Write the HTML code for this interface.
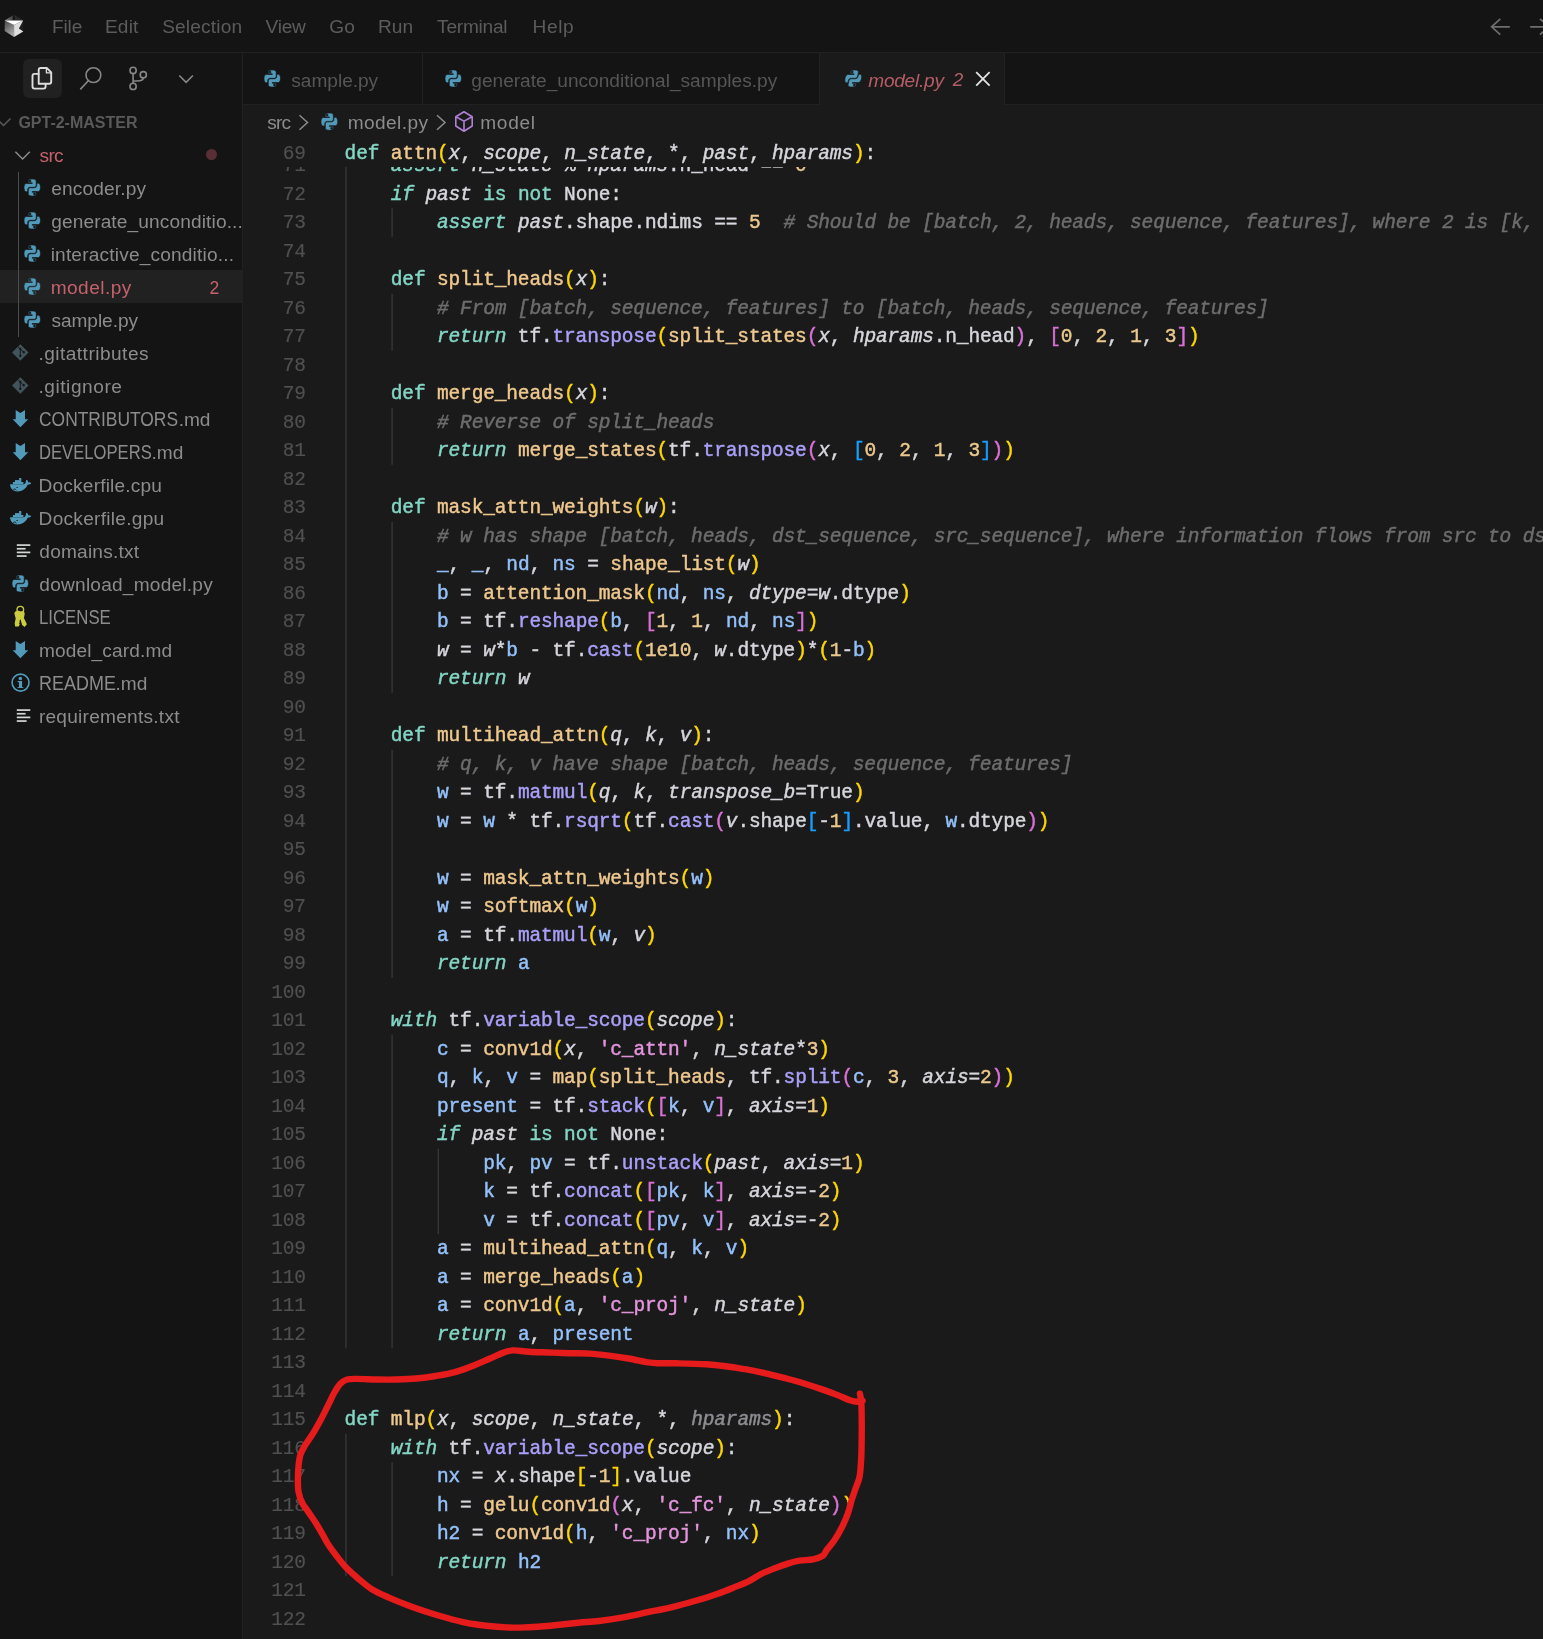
<!DOCTYPE html><html lang="en"><head><meta charset="utf-8"><title>model.py - gpt-2-master - Cursor</title><style>
*{box-sizing:border-box;margin:0;padding:0}
html,body{width:1543px;height:1639px;overflow:hidden;background:#141414}
body{position:relative;font-family:"Liberation Sans",sans-serif;color:#8c8c8c;will-change:transform}
.abs{position:absolute}
.t{position:absolute;white-space:pre;line-height:1}
#title{left:0;top:0;width:1543px;height:52px;background:#141414;border-bottom:1px solid #212121;height:53px}
.menu{font-size:19.1px;color:#5c5c5c;top:16.80px}
#side{left:0;top:53px;width:242px;height:1586px;background:#141414}
#sideborder{left:242px;top:53px;width:1px;height:1586px;background:#212121}
#tabs{left:243px;top:53px;width:1300px;height:52px;background:#141414;border-bottom:1px solid #212121}
#ed{left:243px;top:105px;width:1300px;height:1534px;background:#1a1a1a;overflow:hidden}
.row{position:absolute;left:0;width:242px;height:33px}
.lbl{font-size:19.1px;color:#8c8c8c}
.code{font-family:"Liberation Mono","DejaVu Sans Mono",monospace;font-size:19.5px;letter-spacing:-0.1519px;-webkit-text-stroke:0.45px;color:#d6d6dd;white-space:pre;position:absolute;line-height:28.5px;height:28.5px}
.ln{font-family:"Liberation Mono","DejaVu Sans Mono",monospace;font-size:19.5px;letter-spacing:-0.1519px;-webkit-text-stroke:0.15px;color:#505050;white-space:pre;position:absolute;line-height:28.5px;height:28.5px;text-align:right;width:80px}
.k{color:#83d6c5} .ki{color:#83d6c5;font-style:italic}
.f,.fd{color:#efc88e} .m{color:#aaa0fa} .p{font-style:italic;color:#d6d6dd} .pd{font-style:italic;color:#8d8d92}
.v{color:#94c1fa} .n{color:#ebc88d} .s{color:#e394dc} .c{color:#6d6d6d;font-style:italic}
.b1{color:#ffd700} .b2{color:#da70d6} .b3{color:#179fff}
.g{position:absolute;width:1px;background:#333}
</style></head><body>
<div id="title" class="abs">
<svg class="abs" style="left:0.00px;top:0.00px;overflow:visible" width="40" height="52" viewBox="0 0 40 52" ><defs>
<linearGradient id="cgl" x1="0" y1="0" x2="0.5" y2="1"><stop offset="0" stop-color="#454545"/><stop offset="1" stop-color="#a8a8a8"/></linearGradient>
<linearGradient id="cgt" x1="0" y1="0" x2="1" y2="0"><stop offset="0" stop-color="#8c8c8c"/><stop offset="0.75" stop-color="#4a4a4a"/><stop offset="1" stop-color="#161616"/></linearGradient>
</defs>
<polygon points="14.0,14.7 4.7,20.6 14.0,20.6" fill="url(#cgt)"/>
<polygon points="14.0,14.7 23.2,20.6 14.0,20.6" fill="#2a2a2a"/>
<polygon points="14.0,14.7 13.2,19.6 14.9,19.6" fill="#0c0c0c"/>
<polygon points="4.7,20.6 14.1,25.0 14.1,37.1 4.7,31.1" fill="url(#cgl)"/>
<polygon points="23.2,20.6 23.3,31.6 18.9,28.5" fill="#1e1e1e"/>
<polygon points="14.1,25.0 23.2,20.6 18.9,28.5 23.3,31.6 14.1,37.1" fill="#dedede"/>
<polygon points="4.7,20.6 23.2,20.6 14.1,25.0" fill="#ffffff"/></svg>
<div class="t menu" style="left:51.88px;letter-spacing:-0.087px">File</div>
<div class="t menu" style="left:104.98px;letter-spacing:0.165px">Edit</div>
<div class="t menu" style="left:162.18px;letter-spacing:0.167px">Selection</div>
<div class="t menu" style="left:265.47px;letter-spacing:-0.221px">View</div>
<div class="t menu" style="left:329.29px;letter-spacing:0.000px">Go</div>
<div class="t menu" style="left:377.98px;letter-spacing:0.034px">Run</div>
<div class="t menu" style="left:437.12px;letter-spacing:-0.241px">Terminal</div>
<div class="t menu" style="left:532.48px;letter-spacing:0.629px">Help</div>
<svg class="abs" style="left:0.00px;top:0.00px;overflow:visible" width="1543" height="52" viewBox="0 0 1543 52" ><path d="M1500.3 18.9 L1491.6 26.8 L1500.3 34.6 M1491.8 26.8 H1509.8" fill="none" stroke="#6e6e6e" stroke-width="1.7"/><path d="M1530.2 26.8 H1548 M1540 18.9 L1548.7 26.8 L1540 34.6" fill="none" stroke="#6e6e6e" stroke-width="1.7"/></svg>
</div>
<div id="side" class="abs"></div>
<svg class="abs" style="left:0.00px;top:0.00px;overflow:visible" width="242" height="110" viewBox="0 0 242 110" ><rect x="23.1" y="59.1" width="38.8" height="38.8" rx="6" fill="#212121"/>
<g fill="none" stroke="#dedede" stroke-width="1.9" stroke-linejoin="round" stroke-linecap="round">
<path d="M38.7 83.8 V70 a2 2 0 0 1 2 -2 H46.8 L51.2 72.4 V81.8 a2 2 0 0 1 -2 2 Z"/>
<path d="M46.4 68.4 V72.9 H50.9" stroke-width="1.3"/>
<path d="M38.4 73.9 H34.5 a2 2 0 0 0 -2 2 V86.6 a2 2 0 0 0 2 2 H43.6 a2 2 0 0 0 2 -2 V84.2"/>
</g>
<g fill="none" stroke="#878787" stroke-width="1.6" stroke-linecap="butt">
<circle cx="93.4" cy="75.1" r="7.4"/>
<path d="M88.3 80.7 L80.3 89.4"/>
<circle cx="133.1" cy="70.4" r="3.1"/>
<circle cx="133.1" cy="86.4" r="3.1"/>
<circle cx="143.3" cy="74.7" r="3.1"/>
<path d="M133.1 73.5 V83.3"/>
<path d="M143.3 77.8 C143.3 80.9 140 81 133.3 81"/>
<path d="M179.3 75.5 L186.1 82.4 L192.9 75.5"/>
</g></svg>
<div class="abs" style="left:0;top:270px;width:242px;height:33px;background:#212121"></div>
<div class="abs" style="left:18px;top:171.5px;width:1px;height:165px;background:#4c4c4c"></div>
<svg class="abs" style="left:0.00px;top:0.00px;overflow:visible" width="60" height="400" viewBox="0 0 60 400" ><path d="M-3.5 118.5 L3.5 125.5 L10.5 118.5" fill="none" stroke="#5a5a5a" stroke-width="1.5"/></svg>
<div class="t" style="left:18.39px;letter-spacing:-0.001px;top:114.9px;font-size:16px;font-weight:bold;color:#5a5a5a">GPT-2-MASTER</div>
<svg class="abs" style="left:0.00px;top:0.00px;overflow:visible" width="60" height="200" viewBox="0 0 60 200" ><path d="M15.4 151.7 L22.6 159.0 L29.8 151.7" fill="none" stroke="#8c8c8c" stroke-width="1.5"/></svg>
<div class="t lbl" style="left:39.62px;letter-spacing:-0.763px;top:145.70px;color:#c4616b">src</div>
<svg class="abs" style="left:24.25px;top:179.07px;overflow:visible" width="16.49" height="17.06" viewBox="0 0 110.6 109.8" preserveAspectRatio="none"><g fill="#519aba" fill-rule="evenodd" stroke="#141414" stroke-width="4.5" stroke-linejoin="round"><path d="M54.9 0C26.8 0 28.6 12.2 28.6 12.2l.03 12.6h26.8v3.8H18S0 26.6 0 55s15.7 27.4 15.7 27.4h9.4V69.2s-.5-15.7 15.4-15.7h26.6s14.9.24 14.9-14.4V14.9S84.3 0 54.9 0zM40.1 8.5m0-1.6a6.4 6.4 0 1 1 0 12.8 6.4 6.4 0 0 1 0-12.8z"/><path d="M55.7 109.8c28.1 0 26.3-12.2 26.3-12.2l-.03-12.6H55.2v-3.8h37.4s18 2 18-26.3-15.7-27.4-15.7-27.4h-9.4v13.2s.5 15.7-15.4 15.7H43.5s-14.9-.24-14.9 14.4v24.2s-2.3 14.9 27.1 14.9zm14.8-8.5m0 1.6a6.4 6.4 0 1 1 0-12.8 6.4 6.4 0 0 1 0 12.8z"/></g></svg>
<div class="t lbl" style="left:51.14px;letter-spacing:0.161px;top:178.70px">encoder.py</div>
<svg class="abs" style="left:24.25px;top:212.07px;overflow:visible" width="16.49" height="17.06" viewBox="0 0 110.6 109.8" preserveAspectRatio="none"><g fill="#519aba" fill-rule="evenodd" stroke="#141414" stroke-width="4.5" stroke-linejoin="round"><path d="M54.9 0C26.8 0 28.6 12.2 28.6 12.2l.03 12.6h26.8v3.8H18S0 26.6 0 55s15.7 27.4 15.7 27.4h9.4V69.2s-.5-15.7 15.4-15.7h26.6s14.9.24 14.9-14.4V14.9S84.3 0 54.9 0zM40.1 8.5m0-1.6a6.4 6.4 0 1 1 0 12.8 6.4 6.4 0 0 1 0-12.8z"/><path d="M55.7 109.8c28.1 0 26.3-12.2 26.3-12.2l-.03-12.6H55.2v-3.8h37.4s18 2 18-26.3-15.7-27.4-15.7-27.4h-9.4v13.2s.5 15.7-15.4 15.7H43.5s-14.9-.24-14.9 14.4v24.2s-2.3 14.9 27.1 14.9zm14.8-8.5m0 1.6a6.4 6.4 0 1 1 0-12.8 6.4 6.4 0 0 1 0 12.8z"/></g></svg>
<div class="t lbl" style="left:51.15px;letter-spacing:0.130px;top:211.70px">generate_unconditio...</div>
<svg class="abs" style="left:24.25px;top:245.07px;overflow:visible" width="16.49" height="17.06" viewBox="0 0 110.6 109.8" preserveAspectRatio="none"><g fill="#519aba" fill-rule="evenodd" stroke="#141414" stroke-width="4.5" stroke-linejoin="round"><path d="M54.9 0C26.8 0 28.6 12.2 28.6 12.2l.03 12.6h26.8v3.8H18S0 26.6 0 55s15.7 27.4 15.7 27.4h9.4V69.2s-.5-15.7 15.4-15.7h26.6s14.9.24 14.9-14.4V14.9S84.3 0 54.9 0zM40.1 8.5m0-1.6a6.4 6.4 0 1 1 0 12.8 6.4 6.4 0 0 1 0-12.8z"/><path d="M55.7 109.8c28.1 0 26.3-12.2 26.3-12.2l-.03-12.6H55.2v-3.8h37.4s18 2 18-26.3-15.7-27.4-15.7-27.4h-9.4v13.2s.5 15.7-15.4 15.7H43.5s-14.9-.24-14.9 14.4v24.2s-2.3 14.9 27.1 14.9zm14.8-8.5m0 1.6a6.4 6.4 0 1 1 0-12.8 6.4 6.4 0 0 1 0 12.8z"/></g></svg>
<div class="t lbl" style="left:50.67px;letter-spacing:0.182px;top:244.70px">interactive_conditio...</div>
<svg class="abs" style="left:24.25px;top:278.07px;overflow:visible" width="16.49" height="17.06" viewBox="0 0 110.6 109.8" preserveAspectRatio="none"><g fill="#519aba" fill-rule="evenodd" stroke="#212121" stroke-width="4.5" stroke-linejoin="round"><path d="M54.9 0C26.8 0 28.6 12.2 28.6 12.2l.03 12.6h26.8v3.8H18S0 26.6 0 55s15.7 27.4 15.7 27.4h9.4V69.2s-.5-15.7 15.4-15.7h26.6s14.9.24 14.9-14.4V14.9S84.3 0 54.9 0zM40.1 8.5m0-1.6a6.4 6.4 0 1 1 0 12.8 6.4 6.4 0 0 1 0-12.8z"/><path d="M55.7 109.8c28.1 0 26.3-12.2 26.3-12.2l-.03-12.6H55.2v-3.8h37.4s18 2 18-26.3-15.7-27.4-15.7-27.4h-9.4v13.2s.5 15.7-15.4 15.7H43.5s-14.9-.24-14.9 14.4v24.2s-2.3 14.9 27.1 14.9zm14.8-8.5m0 1.6a6.4 6.4 0 1 1 0-12.8 6.4 6.4 0 0 1 0 12.8z"/></g></svg>
<div class="t lbl" style="left:50.68px;letter-spacing:0.458px;top:277.70px;color:#c4616b">model.py</div>
<svg class="abs" style="left:24.25px;top:311.07px;overflow:visible" width="16.49" height="17.06" viewBox="0 0 110.6 109.8" preserveAspectRatio="none"><g fill="#519aba" fill-rule="evenodd" stroke="#141414" stroke-width="4.5" stroke-linejoin="round"><path d="M54.9 0C26.8 0 28.6 12.2 28.6 12.2l.03 12.6h26.8v3.8H18S0 26.6 0 55s15.7 27.4 15.7 27.4h9.4V69.2s-.5-15.7 15.4-15.7h26.6s14.9.24 14.9-14.4V14.9S84.3 0 54.9 0zM40.1 8.5m0-1.6a6.4 6.4 0 1 1 0 12.8 6.4 6.4 0 0 1 0-12.8z"/><path d="M55.7 109.8c28.1 0 26.3-12.2 26.3-12.2l-.03-12.6H55.2v-3.8h37.4s18 2 18-26.3-15.7-27.4-15.7-27.4h-9.4v13.2s.5 15.7-15.4 15.7H43.5s-14.9-.24-14.9 14.4v24.2s-2.3 14.9 27.1 14.9zm14.8-8.5m0 1.6a6.4 6.4 0 1 1 0-12.8 6.4 6.4 0 0 1 0 12.8z"/></g></svg>
<div class="t lbl" style="left:51.42px;letter-spacing:-0.048px;top:310.70px">sample.py</div>
<svg class="abs" style="left:0.00px;top:0.00px;overflow:visible" width="60" height="800" viewBox="0 0 60 800" ><path d="M20.3 344.15 L28.6 352.45 L20.3 360.75 L12.0 352.45 Z" fill="#41535b"/><path d="M17.7 346.55 L23.7 352.34999999999997 M20.3 349.05 V355.95" stroke="#141414" stroke-width="0.9" fill="none"/><circle cx="20.3" cy="348.95" r="1.15" fill="#141414"/><circle cx="23.75" cy="352.25" r="1.15" fill="#141414"/><circle cx="20.3" cy="355.95" r="1.15" fill="#141414"/></svg>
<div class="t lbl" style="left:38.41px;letter-spacing:0.469px;top:343.70px">.gitattributes</div>
<svg class="abs" style="left:0.00px;top:0.00px;overflow:visible" width="60" height="800" viewBox="0 0 60 800" ><path d="M20.3 377.15 L28.6 385.45 L20.3 393.75 L12.0 385.45 Z" fill="#41535b"/><path d="M17.7 379.55 L23.7 385.34999999999997 M20.3 382.05 V388.95" stroke="#141414" stroke-width="0.9" fill="none"/><circle cx="20.3" cy="381.95" r="1.15" fill="#141414"/><circle cx="23.75" cy="385.25" r="1.15" fill="#141414"/><circle cx="20.3" cy="388.95" r="1.15" fill="#141414"/></svg>
<div class="t lbl" style="left:38.41px;letter-spacing:0.558px;top:376.70px">.gitignore</div>
<svg class="abs" style="left:0.00px;top:0.00px;overflow:visible" width="60" height="800" viewBox="0 0 60 800" ><polygon fill="#519aba" points="15.7,410.0 20.4,413.0 25.0,410.0 25.0,419.2 28.25,419.2 20.4,427.2 12.7,419.2 15.7,419.2"/></svg>
<div class="t lbl" style="left:39.27px;top:409.70px"><span style="display:inline-block;width:139.38px;vertical-align:baseline"><span style="display:inline-block;font-size:19.5px;transform:scaleX(0.8934);transform-origin:0 50%">CONTRIBUTORS</span></span>.md</div>
<svg class="abs" style="left:0.00px;top:0.00px;overflow:visible" width="60" height="800" viewBox="0 0 60 800" ><polygon fill="#519aba" points="15.7,443.0 20.4,446.0 25.0,443.0 25.0,452.2 28.25,452.2 20.4,460.2 12.7,452.2 15.7,452.2"/></svg>
<div class="t lbl" style="left:38.79px;top:442.70px"><span style="display:inline-block;width:112.76px;vertical-align:baseline"><span style="display:inline-block;font-size:19.5px;transform:scaleX(0.8528);transform-origin:0 50%">DEVELOPERS</span></span>.md</div>
<svg class="abs" style="left:0.00px;top:0.00px;overflow:visible" width="60" height="800" viewBox="0 0 60 800" ><path fill="#519aba" d="M10.1 484.3 H22.5 C24.8 484.3 25.9 482.8 25.9 481.4 C25.9 480.4 26.3 479.9 27 480.1 C27.9 480.7 28.1 481.7 28.2 482.4 C29.3 482.0 30.6 482.4 31.3 483.0 C30.6 484.4 29 484.8 27.6 484.7 C26 488.6 22.5 491.4 17.5 491.4 C12.8 491.4 10.1 488.4 10.1 484.3 Z"/><rect x="12.9" y="482.0" width="10.5" height="2.1" fill="#519aba"/><rect x="15" y="480.1" width="6.3" height="2" fill="#519aba"/><rect x="19.1" y="478.0" width="2.2" height="2.2" fill="#519aba"/><ellipse cx="17.1" cy="487.5" rx="0.8" ry="0.55" fill="#141414"/><path d="M13.2 489.6 C14.2 488.7 15.8 488.8 16.4 490.3" stroke="#141414" stroke-width="0.8" fill="none"/></svg>
<div class="t lbl" style="left:38.58px;letter-spacing:0.186px;top:475.70px">Dockerfile.cpu</div>
<svg class="abs" style="left:0.00px;top:0.00px;overflow:visible" width="60" height="800" viewBox="0 0 60 800" ><path fill="#519aba" d="M10.1 517.3 H22.5 C24.8 517.3 25.9 515.8 25.9 514.4 C25.9 513.4 26.3 512.9 27 513.1 C27.9 513.7 28.1 514.7 28.2 515.4 C29.3 515.0 30.6 515.4 31.3 516.0 C30.6 517.4 29 517.8 27.6 517.7 C26 521.6 22.5 524.4 17.5 524.4 C12.8 524.4 10.1 521.4 10.1 517.3 Z"/><rect x="12.9" y="515.0" width="10.5" height="2.1" fill="#519aba"/><rect x="15" y="513.1" width="6.3" height="2" fill="#519aba"/><rect x="19.1" y="511.0" width="2.2" height="2.2" fill="#519aba"/><ellipse cx="17.1" cy="520.5" rx="0.8" ry="0.55" fill="#141414"/><path d="M13.2 522.6 C14.2 521.7 15.8 521.8 16.4 523.3" stroke="#141414" stroke-width="0.8" fill="none"/></svg>
<div class="t lbl" style="left:38.58px;letter-spacing:0.273px;top:508.70px">Dockerfile.gpu</div>
<svg class="abs" style="left:0.00px;top:0.00px;overflow:visible" width="60" height="800" viewBox="0 0 60 800" ><rect x="16.8" y="544.25" width="13.5" height="1.7" fill="#d4d7d6"/><rect x="16.8" y="547.90" width="8.8" height="1.7" fill="#d4d7d6"/><rect x="16.8" y="551.55" width="13.5" height="1.7" fill="#d4d7d6"/><rect x="16.8" y="555.20" width="9.8" height="1.7" fill="#d4d7d6"/></svg>
<div class="t lbl" style="left:39.35px;letter-spacing:0.198px;top:541.70px">domains.txt</div>
<svg class="abs" style="left:12.45px;top:575.07px;overflow:visible" width="16.49" height="17.06" viewBox="0 0 110.6 109.8" preserveAspectRatio="none"><g fill="#519aba" fill-rule="evenodd" stroke="#141414" stroke-width="4.5" stroke-linejoin="round"><path d="M54.9 0C26.8 0 28.6 12.2 28.6 12.2l.03 12.6h26.8v3.8H18S0 26.6 0 55s15.7 27.4 15.7 27.4h9.4V69.2s-.5-15.7 15.4-15.7h26.6s14.9.24 14.9-14.4V14.9S84.3 0 54.9 0zM40.1 8.5m0-1.6a6.4 6.4 0 1 1 0 12.8 6.4 6.4 0 0 1 0-12.8z"/><path d="M55.7 109.8c28.1 0 26.3-12.2 26.3-12.2l-.03-12.6H55.2v-3.8h37.4s18 2 18-26.3-15.7-27.4-15.7-27.4h-9.4v13.2s.5 15.7-15.4 15.7H43.5s-14.9-.24-14.9 14.4v24.2s-2.3 14.9 27.1 14.9zm14.8-8.5m0 1.6a6.4 6.4 0 1 1 0-12.8 6.4 6.4 0 0 1 0 12.8z"/></g></svg>
<div class="t lbl" style="left:39.35px;letter-spacing:0.222px;top:574.70px">download_model.py</div>
<svg class="abs" style="left:0.00px;top:0.00px;overflow:visible" width="60" height="800" viewBox="0 0 60 800" ><circle cx="20.3" cy="609.7" r="3.3" fill="none" stroke="#cbcb41" stroke-width="1.4"/><path fill="#cbcb41" d="M14.5 614.0 C13.8 610.5 19.3 610.0 20.6 611.5 C22.3 610.0 25.3 611.5 24.6 614.5 L23.900000000000002 618.0 L26.9 624.2 L24.6 626.9 L22.1 625.0 L20.5 619.2 L19.400000000000002 620.2 L20.1 621.0 L19.1 621.8 L20.0 622.8 L18.900000000000002 623.6 L19.8 624.6 L18.7 626.6 L15.100000000000001 626.6 L14.700000000000001 623.0 L15.700000000000001 618.5 Z"/></svg>
<div class="t lbl" style="left:38.77px;top:607.70px"><span style="display:inline-block;width:71.80px;vertical-align:baseline"><span style="display:inline-block;font-size:19.5px;transform:scaleX(0.8604);transform-origin:0 50%">LICENSE</span></span></div>
<svg class="abs" style="left:0.00px;top:0.00px;overflow:visible" width="60" height="800" viewBox="0 0 60 800" ><polygon fill="#519aba" points="15.7,641.0 20.4,644.0 25.0,641.0 25.0,650.2 28.25,650.2 20.4,658.2 12.7,650.2 15.7,650.2"/></svg>
<div class="t lbl" style="left:38.88px;letter-spacing:0.130px;top:640.70px">model_card.md</div>
<svg class="abs" style="left:0.00px;top:0.00px;overflow:visible" width="60" height="800" viewBox="0 0 60 800" ><circle cx="20.55" cy="682.6" r="8.5" fill="none" stroke="#519aba" stroke-width="1.6"/><circle cx="20.35" cy="678.4" r="1.75" fill="#519aba"/><path fill="#519aba" d="M17.55 681.1 H22.1 V687.0 L23.35 687.3000000000001 V688.1 H17.55 V687.3000000000001 L18.95 687.0 V682.2 L17.55 681.9 Z"/></svg>
<div class="t lbl" style="left:38.68px;top:673.70px"><span style="display:inline-block;width:76.87px;vertical-align:baseline"><span style="display:inline-block;font-size:19.5px;transform:scaleX(0.9213);transform-origin:0 50%">README</span></span>.md</div>
<svg class="abs" style="left:0.00px;top:0.00px;overflow:visible" width="60" height="800" viewBox="0 0 60 800" ><rect x="16.8" y="709.25" width="13.5" height="1.7" fill="#d4d7d6"/><rect x="16.8" y="712.90" width="8.8" height="1.7" fill="#d4d7d6"/><rect x="16.8" y="716.55" width="13.5" height="1.7" fill="#d4d7d6"/><rect x="16.8" y="720.20" width="9.8" height="1.7" fill="#d4d7d6"/></svg>
<div class="t lbl" style="left:38.88px;letter-spacing:0.251px;top:706.70px">requirements.txt</div>
<div class="abs" style="left:205.8px;top:148.75px;width:11.5px;height:11.5px;border-radius:50%;background:#5a2e35"></div>
<div class="t lbl" style="left:209.47px;letter-spacing:0.000px;top:280.30px;color:#c4616b;font-size:17.5px">2</div>
<div id="sideborder" class="abs"></div>
<div id="tabs" class="abs"></div>
<div class="abs" style="left:422px;top:53px;width:1px;height:52px;background:#212121"></div>
<div class="abs" style="left:819px;top:53px;width:1px;height:52px;background:#212121"></div>
<div class="abs" style="left:820px;top:53px;width:185px;height:52px;background:#1a1a1a"></div>
<div class="abs" style="left:1004px;top:53px;width:1px;height:52px;background:#212121"></div>
<svg class="abs" style="left:264.45px;top:70.07px;overflow:visible" width="16.49" height="17.06" viewBox="0 0 110.6 109.8" preserveAspectRatio="none"><g fill="#519aba" fill-rule="evenodd" stroke="#141414" stroke-width="4.5" stroke-linejoin="round"><path d="M54.9 0C26.8 0 28.6 12.2 28.6 12.2l.03 12.6h26.8v3.8H18S0 26.6 0 55s15.7 27.4 15.7 27.4h9.4V69.2s-.5-15.7 15.4-15.7h26.6s14.9.24 14.9-14.4V14.9S84.3 0 54.9 0zM40.1 8.5m0-1.6a6.4 6.4 0 1 1 0 12.8 6.4 6.4 0 0 1 0-12.8z"/><path d="M55.7 109.8c28.1 0 26.3-12.2 26.3-12.2l-.03-12.6H55.2v-3.8h37.4s18 2 18-26.3-15.7-27.4-15.7-27.4h-9.4v13.2s.5 15.7-15.4 15.7H43.5s-14.9-.24-14.9 14.4v24.2s-2.3 14.9 27.1 14.9zm14.8-8.5m0 1.6a6.4 6.4 0 1 1 0-12.8 6.4 6.4 0 0 1 0 12.8z"/></g></svg>
<div class="t lbl" style="left:291.32px;letter-spacing:-0.023px;top:70.90px;color:#565656">sample.py</div>
<svg class="abs" style="left:444.65px;top:69.97px;overflow:visible" width="16.49" height="17.06" viewBox="0 0 110.6 109.8" preserveAspectRatio="none"><g fill="#519aba" fill-rule="evenodd" stroke="#141414" stroke-width="4.5" stroke-linejoin="round"><path d="M54.9 0C26.8 0 28.6 12.2 28.6 12.2l.03 12.6h26.8v3.8H18S0 26.6 0 55s15.7 27.4 15.7 27.4h9.4V69.2s-.5-15.7 15.4-15.7h26.6s14.9.24 14.9-14.4V14.9S84.3 0 54.9 0zM40.1 8.5m0-1.6a6.4 6.4 0 1 1 0 12.8 6.4 6.4 0 0 1 0-12.8z"/><path d="M55.7 109.8c28.1 0 26.3-12.2 26.3-12.2l-.03-12.6H55.2v-3.8h37.4s18 2 18-26.3-15.7-27.4-15.7-27.4h-9.4v13.2s.5 15.7-15.4 15.7H43.5s-14.9-.24-14.9 14.4v24.2s-2.3 14.9 27.1 14.9zm14.8-8.5m0 1.6a6.4 6.4 0 1 1 0-12.8 6.4 6.4 0 0 1 0 12.8z"/></g></svg>
<div class="t lbl" style="left:471.25px;letter-spacing:0.007px;top:70.90px;color:#565656">generate_unconditional_samples.py</div>
<svg class="abs" style="left:844.65px;top:69.87px;overflow:visible" width="16.49" height="17.06" viewBox="0 0 110.6 109.8" preserveAspectRatio="none"><g transform="translate(55.3 54.9) skewX(-11) translate(-55.3 -54.9)" fill="#519aba" fill-rule="evenodd" stroke="#1a1a1a" stroke-width="4.5" stroke-linejoin="round"><path d="M54.9 0C26.8 0 28.6 12.2 28.6 12.2l.03 12.6h26.8v3.8H18S0 26.6 0 55s15.7 27.4 15.7 27.4h9.4V69.2s-.5-15.7 15.4-15.7h26.6s14.9.24 14.9-14.4V14.9S84.3 0 54.9 0zM40.1 8.5m0-1.6a6.4 6.4 0 1 1 0 12.8 6.4 6.4 0 0 1 0-12.8z"/><path d="M55.7 109.8c28.1 0 26.3-12.2 26.3-12.2l-.03-12.6H55.2v-3.8h37.4s18 2 18-26.3-15.7-27.4-15.7-27.4h-9.4v13.2s.5 15.7-15.4 15.7H43.5s-14.9-.24-14.9 14.4v24.2s-2.3 14.9 27.1 14.9zm14.8-8.5m0 1.6a6.4 6.4 0 1 1 0-12.8 6.4 6.4 0 0 1 0 12.8z"/></g></svg>
<div class="t lbl" style="left:868.23px;letter-spacing:-0.249px;top:70.90px;color:#b55d67;font-style:italic">model.py</div>
<div class="t lbl" style="left:952.66px;letter-spacing:0.000px;top:70.45px;color:#b55d67;font-style:italic;font-size:19px">2</div>
<svg class="abs" style="left:0.00px;top:0.00px;overflow:visible" width="1100" height="110" viewBox="0 0 1100 110" ><path d="M976.1999999999999 72.2 L989.6 85.60000000000001 M989.6 72.2 L976.1999999999999 85.60000000000001" fill="none" stroke="#e4e4e4" stroke-width="1.8"/></svg>
<div id="ed" class="abs"></div>
<div class="t lbl" style="left:267.22px;letter-spacing:-0.800px;top:112.70px">src</div>
<svg class="abs" style="left:0.00px;top:0.00px;overflow:visible" width="600" height="140" viewBox="0 0 600 140" ><path d="M299.5 115.3 L307.5 122.5 L299.5 129.7" fill="none" stroke="#8c8c8c" stroke-width="1.5"/></svg>
<svg class="abs" style="left:321.30px;top:112.87px;overflow:visible" width="16.69" height="17.26" viewBox="0 0 110.6 109.8" preserveAspectRatio="none"><g fill="#519aba" fill-rule="evenodd" stroke="#1a1a1a" stroke-width="4.5" stroke-linejoin="round"><path d="M54.9 0C26.8 0 28.6 12.2 28.6 12.2l.03 12.6h26.8v3.8H18S0 26.6 0 55s15.7 27.4 15.7 27.4h9.4V69.2s-.5-15.7 15.4-15.7h26.6s14.9.24 14.9-14.4V14.9S84.3 0 54.9 0zM40.1 8.5m0-1.6a6.4 6.4 0 1 1 0 12.8 6.4 6.4 0 0 1 0-12.8z"/><path d="M55.7 109.8c28.1 0 26.3-12.2 26.3-12.2l-.03-12.6H55.2v-3.8h37.4s18 2 18-26.3-15.7-27.4-15.7-27.4h-9.4v13.2s.5 15.7-15.4 15.7H43.5s-14.9-.24-14.9 14.4v24.2s-2.3 14.9 27.1 14.9zm14.8-8.5m0 1.6a6.4 6.4 0 1 1 0-12.8 6.4 6.4 0 0 1 0 12.8z"/></g></svg>
<div class="t lbl" style="left:347.68px;letter-spacing:0.401px;top:112.70px">model.py</div>
<svg class="abs" style="left:0.00px;top:0.00px;overflow:visible" width="600" height="140" viewBox="0 0 600 140" ><path d="M437 115.3 L445 122.5 L437 129.7" fill="none" stroke="#8c8c8c" stroke-width="1.5"/></svg>
<svg class="abs" style="left:0.00px;top:0.00px;overflow:visible" width="600" height="140" viewBox="0 0 600 140" ><g fill="none" stroke="#b180d7" stroke-width="1.6" stroke-linejoin="round"><path d="M464 111.8 L472.2 116.8 V126.0 L464 131.2 L455.8 126.0 V116.8 Z"/><path d="M455.8 116.8 L464 121.1 L472.2 116.8 M464 121.1 V131.2"/></g></svg>
<div class="t lbl" style="left:480.28px;letter-spacing:0.700px;top:112.70px">model</div>
<div class="abs" id="vp" style="left:243px;top:138.5px;width:1300px;height:1500.5px;overflow:hidden">
<svg class="abs" style="left:0;top:0" width="1300" height="1500.5" fill="#363636"><rect x="102.20" y="-16.20" width="1.4" height="1225.50"/><rect x="102.20" y="1294.80" width="1.4" height="142.50"/><rect x="148.40" y="69.30" width="1.4" height="28.50"/><rect x="148.40" y="154.80" width="1.4" height="57.00"/><rect x="148.40" y="268.80" width="1.4" height="57.00"/><rect x="148.40" y="382.80" width="1.4" height="171.00"/><rect x="148.40" y="610.80" width="1.4" height="228.00"/><rect x="148.40" y="895.80" width="1.4" height="313.50"/><rect x="148.40" y="1323.30" width="1.4" height="114.00"/><rect x="194.60" y="1009.80" width="1.4" height="85.50"/></svg>
<div class="ln" style="left:-17.19999999999999px;top:13.70px">71</div>
<div class="code" style="left:101.60000000000002px;top:13.70px">    <span class="ki">assert</span> <span class="p">n_state</span> % <span class="p">hparams</span>.n_head == <span class="n">0</span></div>
<div class="ln" style="left:-17.19999999999999px;top:42.20px">72</div>
<div class="code" style="left:101.60000000000002px;top:42.20px">    <span class="ki">if</span> <span class="p">past</span> <span class="k">is</span> <span class="k">not</span> None:</div>
<div class="ln" style="left:-17.19999999999999px;top:70.70px">73</div>
<div class="code" style="left:101.60000000000002px;top:70.70px">        <span class="ki">assert</span> <span class="p">past</span>.shape.ndims == <span class="n">5</span>  <span class="c"># Should be [batch, 2, heads, sequence, features], where 2 is [k, v]</span></div>
<div class="ln" style="left:-17.19999999999999px;top:99.20px">74</div>
<div class="ln" style="left:-17.19999999999999px;top:127.70px">75</div>
<div class="code" style="left:101.60000000000002px;top:127.70px">    <span class="k">def</span> <span class="fd">split_heads</span><span class="b1">(</span><span class="p">x</span><span class="b1">)</span>:</div>
<div class="ln" style="left:-17.19999999999999px;top:156.20px">76</div>
<div class="code" style="left:101.60000000000002px;top:156.20px">        <span class="c"># From [batch, sequence, features] to [batch, heads, sequence, features]</span></div>
<div class="ln" style="left:-17.19999999999999px;top:184.70px">77</div>
<div class="code" style="left:101.60000000000002px;top:184.70px">        <span class="ki">return</span> tf.<span class="m">transpose</span><span class="b1">(</span><span class="f">split_states</span><span class="b2">(</span><span class="p">x</span>, <span class="p">hparams</span>.n_head<span class="b2">)</span>, <span class="b2">[</span><span class="n">0</span>, <span class="n">2</span>, <span class="n">1</span>, <span class="n">3</span><span class="b2">]</span><span class="b1">)</span></div>
<div class="ln" style="left:-17.19999999999999px;top:213.20px">78</div>
<div class="ln" style="left:-17.19999999999999px;top:241.70px">79</div>
<div class="code" style="left:101.60000000000002px;top:241.70px">    <span class="k">def</span> <span class="fd">merge_heads</span><span class="b1">(</span><span class="p">x</span><span class="b1">)</span>:</div>
<div class="ln" style="left:-17.19999999999999px;top:270.20px">80</div>
<div class="code" style="left:101.60000000000002px;top:270.20px">        <span class="c"># Reverse of split_heads</span></div>
<div class="ln" style="left:-17.19999999999999px;top:298.70px">81</div>
<div class="code" style="left:101.60000000000002px;top:298.70px">        <span class="ki">return</span> <span class="f">merge_states</span><span class="b1">(</span>tf.<span class="m">transpose</span><span class="b2">(</span><span class="p">x</span>, <span class="b3">[</span><span class="n">0</span>, <span class="n">2</span>, <span class="n">1</span>, <span class="n">3</span><span class="b3">]</span><span class="b2">)</span><span class="b1">)</span></div>
<div class="ln" style="left:-17.19999999999999px;top:327.20px">82</div>
<div class="ln" style="left:-17.19999999999999px;top:355.70px">83</div>
<div class="code" style="left:101.60000000000002px;top:355.70px">    <span class="k">def</span> <span class="fd">mask_attn_weights</span><span class="b1">(</span><span class="p">w</span><span class="b1">)</span>:</div>
<div class="ln" style="left:-17.19999999999999px;top:384.20px">84</div>
<div class="code" style="left:101.60000000000002px;top:384.20px">        <span class="c"># w has shape [batch, heads, dst_sequence, src_sequence], where information flows from src to dst.</span></div>
<div class="ln" style="left:-17.19999999999999px;top:412.70px">85</div>
<div class="code" style="left:101.60000000000002px;top:412.70px">        <span class="v">_</span>, <span class="v">_</span>, <span class="v">nd</span>, <span class="v">ns</span> = <span class="f">shape_list</span><span class="b1">(</span><span class="p">w</span><span class="b1">)</span></div>
<div class="ln" style="left:-17.19999999999999px;top:441.20px">86</div>
<div class="code" style="left:101.60000000000002px;top:441.20px">        <span class="v">b</span> = <span class="f">attention_mask</span><span class="b1">(</span><span class="v">nd</span>, <span class="v">ns</span>, <span class="p">dtype</span>=<span class="p">w</span>.dtype<span class="b1">)</span></div>
<div class="ln" style="left:-17.19999999999999px;top:469.70px">87</div>
<div class="code" style="left:101.60000000000002px;top:469.70px">        <span class="v">b</span> = tf.<span class="m">reshape</span><span class="b1">(</span><span class="v">b</span>, <span class="b2">[</span><span class="n">1</span>, <span class="n">1</span>, <span class="v">nd</span>, <span class="v">ns</span><span class="b2">]</span><span class="b1">)</span></div>
<div class="ln" style="left:-17.19999999999999px;top:498.20px">88</div>
<div class="code" style="left:101.60000000000002px;top:498.20px">        <span class="p">w</span> = <span class="p">w</span>*<span class="v">b</span> - tf.<span class="m">cast</span><span class="b1">(</span><span class="n">1e10</span>, <span class="p">w</span>.dtype<span class="b1">)</span>*<span class="b1">(</span><span class="n">1</span>-<span class="v">b</span><span class="b1">)</span></div>
<div class="ln" style="left:-17.19999999999999px;top:526.70px">89</div>
<div class="code" style="left:101.60000000000002px;top:526.70px">        <span class="ki">return</span> <span class="p">w</span></div>
<div class="ln" style="left:-17.19999999999999px;top:555.20px">90</div>
<div class="ln" style="left:-17.19999999999999px;top:583.70px">91</div>
<div class="code" style="left:101.60000000000002px;top:583.70px">    <span class="k">def</span> <span class="fd">multihead_attn</span><span class="b1">(</span><span class="p">q</span>, <span class="p">k</span>, <span class="p">v</span><span class="b1">)</span>:</div>
<div class="ln" style="left:-17.19999999999999px;top:612.20px">92</div>
<div class="code" style="left:101.60000000000002px;top:612.20px">        <span class="c"># q, k, v have shape [batch, heads, sequence, features]</span></div>
<div class="ln" style="left:-17.19999999999999px;top:640.70px">93</div>
<div class="code" style="left:101.60000000000002px;top:640.70px">        <span class="v">w</span> = tf.<span class="m">matmul</span><span class="b1">(</span><span class="p">q</span>, <span class="p">k</span>, <span class="p">transpose_b</span>=True<span class="b1">)</span></div>
<div class="ln" style="left:-17.19999999999999px;top:669.20px">94</div>
<div class="code" style="left:101.60000000000002px;top:669.20px">        <span class="v">w</span> = <span class="v">w</span> * tf.<span class="m">rsqrt</span><span class="b1">(</span>tf.<span class="m">cast</span><span class="b2">(</span><span class="p">v</span>.shape<span class="b3">[</span>-<span class="n">1</span><span class="b3">]</span>.value, <span class="v">w</span>.dtype<span class="b2">)</span><span class="b1">)</span></div>
<div class="ln" style="left:-17.19999999999999px;top:697.70px">95</div>
<div class="ln" style="left:-17.19999999999999px;top:726.20px">96</div>
<div class="code" style="left:101.60000000000002px;top:726.20px">        <span class="v">w</span> = <span class="f">mask_attn_weights</span><span class="b1">(</span><span class="v">w</span><span class="b1">)</span></div>
<div class="ln" style="left:-17.19999999999999px;top:754.70px">97</div>
<div class="code" style="left:101.60000000000002px;top:754.70px">        <span class="v">w</span> = <span class="f">softmax</span><span class="b1">(</span><span class="v">w</span><span class="b1">)</span></div>
<div class="ln" style="left:-17.19999999999999px;top:783.20px">98</div>
<div class="code" style="left:101.60000000000002px;top:783.20px">        <span class="v">a</span> = tf.<span class="m">matmul</span><span class="b1">(</span><span class="v">w</span>, <span class="p">v</span><span class="b1">)</span></div>
<div class="ln" style="left:-17.19999999999999px;top:811.70px">99</div>
<div class="code" style="left:101.60000000000002px;top:811.70px">        <span class="ki">return</span> <span class="v">a</span></div>
<div class="ln" style="left:-17.19999999999999px;top:840.20px">100</div>
<div class="ln" style="left:-17.19999999999999px;top:868.70px">101</div>
<div class="code" style="left:101.60000000000002px;top:868.70px">    <span class="ki">with</span> tf.<span class="m">variable_scope</span><span class="b1">(</span><span class="p">scope</span><span class="b1">)</span>:</div>
<div class="ln" style="left:-17.19999999999999px;top:897.20px">102</div>
<div class="code" style="left:101.60000000000002px;top:897.20px">        <span class="v">c</span> = <span class="f">conv1d</span><span class="b1">(</span><span class="p">x</span>, <span class="s">'c_attn'</span>, <span class="p">n_state</span>*<span class="n">3</span><span class="b1">)</span></div>
<div class="ln" style="left:-17.19999999999999px;top:925.70px">103</div>
<div class="code" style="left:101.60000000000002px;top:925.70px">        <span class="v">q</span>, <span class="v">k</span>, <span class="v">v</span> = <span class="f">map</span><span class="b1">(</span><span class="f">split_heads</span>, tf.<span class="m">split</span><span class="b2">(</span><span class="v">c</span>, <span class="n">3</span>, <span class="p">axis</span>=<span class="n">2</span><span class="b2">)</span><span class="b1">)</span></div>
<div class="ln" style="left:-17.19999999999999px;top:954.20px">104</div>
<div class="code" style="left:101.60000000000002px;top:954.20px">        <span class="v">present</span> = tf.<span class="m">stack</span><span class="b1">(</span><span class="b2">[</span><span class="v">k</span>, <span class="v">v</span><span class="b2">]</span>, <span class="p">axis</span>=<span class="n">1</span><span class="b1">)</span></div>
<div class="ln" style="left:-17.19999999999999px;top:982.70px">105</div>
<div class="code" style="left:101.60000000000002px;top:982.70px">        <span class="ki">if</span> <span class="p">past</span> <span class="k">is</span> <span class="k">not</span> None:</div>
<div class="ln" style="left:-17.19999999999999px;top:1011.20px">106</div>
<div class="code" style="left:101.60000000000002px;top:1011.20px">            <span class="v">pk</span>, <span class="v">pv</span> = tf.<span class="m">unstack</span><span class="b1">(</span><span class="p">past</span>, <span class="p">axis</span>=<span class="n">1</span><span class="b1">)</span></div>
<div class="ln" style="left:-17.19999999999999px;top:1039.70px">107</div>
<div class="code" style="left:101.60000000000002px;top:1039.70px">            <span class="v">k</span> = tf.<span class="m">concat</span><span class="b1">(</span><span class="b2">[</span><span class="v">pk</span>, <span class="v">k</span><span class="b2">]</span>, <span class="p">axis</span>=-<span class="n">2</span><span class="b1">)</span></div>
<div class="ln" style="left:-17.19999999999999px;top:1068.20px">108</div>
<div class="code" style="left:101.60000000000002px;top:1068.20px">            <span class="v">v</span> = tf.<span class="m">concat</span><span class="b1">(</span><span class="b2">[</span><span class="v">pv</span>, <span class="v">v</span><span class="b2">]</span>, <span class="p">axis</span>=-<span class="n">2</span><span class="b1">)</span></div>
<div class="ln" style="left:-17.19999999999999px;top:1096.70px">109</div>
<div class="code" style="left:101.60000000000002px;top:1096.70px">        <span class="v">a</span> = <span class="f">multihead_attn</span><span class="b1">(</span><span class="v">q</span>, <span class="v">k</span>, <span class="v">v</span><span class="b1">)</span></div>
<div class="ln" style="left:-17.19999999999999px;top:1125.20px">110</div>
<div class="code" style="left:101.60000000000002px;top:1125.20px">        <span class="v">a</span> = <span class="f">merge_heads</span><span class="b1">(</span><span class="v">a</span><span class="b1">)</span></div>
<div class="ln" style="left:-17.19999999999999px;top:1153.70px">111</div>
<div class="code" style="left:101.60000000000002px;top:1153.70px">        <span class="v">a</span> = <span class="f">conv1d</span><span class="b1">(</span><span class="v">a</span>, <span class="s">'c_proj'</span>, <span class="p">n_state</span><span class="b1">)</span></div>
<div class="ln" style="left:-17.19999999999999px;top:1182.20px">112</div>
<div class="code" style="left:101.60000000000002px;top:1182.20px">        <span class="ki">return</span> <span class="v">a</span>, <span class="v">present</span></div>
<div class="ln" style="left:-17.19999999999999px;top:1210.70px">113</div>
<div class="ln" style="left:-17.19999999999999px;top:1239.20px">114</div>
<div class="ln" style="left:-17.19999999999999px;top:1267.70px">115</div>
<div class="code" style="left:101.60000000000002px;top:1267.70px"><span class="k">def</span> <span class="fd">mlp</span><span class="b1">(</span><span class="p">x</span>, <span class="p">scope</span>, <span class="p">n_state</span>, *, <span class="pd">hparams</span><span class="b1">)</span>:</div>
<div class="ln" style="left:-17.19999999999999px;top:1296.20px">116</div>
<div class="code" style="left:101.60000000000002px;top:1296.20px">    <span class="ki">with</span> tf.<span class="m">variable_scope</span><span class="b1">(</span><span class="p">scope</span><span class="b1">)</span>:</div>
<div class="ln" style="left:-17.19999999999999px;top:1324.70px">117</div>
<div class="code" style="left:101.60000000000002px;top:1324.70px">        <span class="v">nx</span> = <span class="p">x</span>.shape<span class="b1">[</span>-<span class="n">1</span><span class="b1">]</span>.value</div>
<div class="ln" style="left:-17.19999999999999px;top:1353.20px">118</div>
<div class="code" style="left:101.60000000000002px;top:1353.20px">        <span class="v">h</span> = <span class="f">gelu</span><span class="b1">(</span><span class="f">conv1d</span><span class="b2">(</span><span class="p">x</span>, <span class="s">'c_fc'</span>, <span class="p">n_state</span><span class="b2">)</span><span class="b1">)</span></div>
<div class="ln" style="left:-17.19999999999999px;top:1381.70px">119</div>
<div class="code" style="left:101.60000000000002px;top:1381.70px">        <span class="v">h2</span> = <span class="f">conv1d</span><span class="b1">(</span><span class="v">h</span>, <span class="s">'c_proj'</span>, <span class="v">nx</span><span class="b1">)</span></div>
<div class="ln" style="left:-17.19999999999999px;top:1410.20px">120</div>
<div class="code" style="left:101.60000000000002px;top:1410.20px">        <span class="ki">return</span> <span class="v">h2</span></div>
<div class="ln" style="left:-17.19999999999999px;top:1438.70px">121</div>
<div class="ln" style="left:-17.19999999999999px;top:1467.20px">122</div>
<div class="ln" style="left:-17.19999999999999px;top:1497.20px">123</div>
<div class="code" style="left:101.60000000000002px;top:1497.20px"><span class="k">def</span> <span class="fd">block</span><span class="b1">(</span><span class="p">x</span>, <span class="p">scope</span>, *, <span class="p">past</span>, <span class="p">hparams</span><span class="b1">)</span>:</div>
<div class="abs" style="left:0;top:0;width:1300px;height:28.5px;background:#1a1a1a"></div>
<div class="ln" style="left:-17.19999999999999px;top:1.2px">69</div>
<div class="code" style="left:101.60000000000002px;top:1.2px"><span class="k">def</span> <span class="fd">attn</span><span class="b1">(</span><span class="p">x</span>, <span class="p">scope</span>, <span class="p">n_state</span>, *, <span class="p">past</span>, <span class="p">hparams</span><span class="b1">)</span>:</div>
</div>
<svg class="abs" style="left:0.00px;top:0.00px;overflow:visible" width="1543" height="1639" viewBox="0 0 1543 1639" ><path d="M859.9 1393.6 C860.1 1395.0 861.0 1398.2 861.3 1402.2 C861.6 1406.2 861.6 1412.0 861.7 1417.8 C861.8 1423.6 861.8 1430.7 861.7 1437.2 C861.6 1443.7 861.6 1450.2 861.3 1456.7 C861.0 1463.2 860.6 1470.9 859.7 1476.1 C858.8 1481.3 857.1 1483.9 855.8 1487.8 C854.5 1491.7 853.2 1495.2 851.9 1499.4 C850.6 1503.6 849.6 1508.5 848 1513.1 C846.4 1517.6 844.5 1522.2 842.2 1526.7 C839.9 1531.2 837.0 1536.4 834.4 1540.3 C831.8 1544.2 828.6 1547.4 826.7 1550 C824.8 1552.6 825.1 1554.2 822.8 1555.8 C820.5 1557.3 816.9 1558.5 813 1559.3 C809.1 1560.1 803.6 1560.0 799.4 1560.7 C795.2 1561.4 792.0 1562.3 787.8 1563.6 C783.6 1564.9 778.8 1566.7 774.2 1568.5 C769.7 1570.3 764.7 1572.2 760.5 1574.3 C756.3 1576.4 753.1 1579.0 748.9 1581.1 C744.7 1583.2 740.5 1584.8 735.3 1586.9 C730.1 1589.0 724.3 1591.4 717.8 1593.7 C711.3 1596.0 704.2 1598.2 696.4 1600.5 C688.6 1602.8 679.2 1605.5 671.1 1607.4 C663.0 1609.4 655.6 1610.6 647.8 1612.2 C640.0 1613.8 632.5 1615.6 624.4 1617.1 C616.3 1618.6 606.6 1620.1 599.2 1621 C591.8 1621.9 585.9 1622.0 580 1622.5 C574.1 1623.0 569.8 1623.7 563.9 1624.3 C558.0 1624.9 550.9 1625.7 544.4 1626.2 C537.9 1626.7 531.5 1627.2 525 1627.4 C518.5 1627.6 512.0 1627.7 505.5 1627.4 C499.0 1627.1 492.6 1626.5 486.1 1625.8 C479.6 1625.0 473.2 1624.2 466.7 1622.9 C460.2 1621.6 453.7 1619.8 447.2 1618 C440.7 1616.2 434.3 1614.3 427.8 1612.2 C421.3 1610.1 414.8 1607.8 408.3 1605.4 C401.8 1603.0 395.0 1600.3 388.9 1597.6 C382.8 1594.8 376.6 1592.1 371.4 1588.9 C366.2 1585.7 362.0 1581.8 357.8 1578.2 C353.6 1574.6 349.7 1571.2 346.1 1567.5 C342.5 1563.8 339.3 1559.5 336.4 1555.8 C333.5 1552.1 330.7 1548.3 328.6 1545.1 C326.5 1541.9 325.6 1539.8 323.7 1536.4 C321.8 1533.0 319.3 1528.6 316.9 1524.7 C314.5 1520.8 311.6 1516.7 309.2 1513.1 C306.8 1509.5 304.2 1506.9 302.4 1503.3 C300.6 1499.7 299.2 1495.6 298.5 1491.7 C297.8 1487.8 297.9 1484.2 297.9 1480 C297.9 1475.8 298.1 1470.6 298.5 1466.4 C298.9 1462.2 299.3 1458.3 300.4 1454.7 C301.5 1451.1 303.2 1448.6 305.3 1445 C307.4 1441.4 310.5 1437.5 313.1 1433.3 C315.7 1429.1 318.2 1424.5 320.8 1419.7 C323.4 1414.9 326.3 1408.7 328.6 1404.2 C330.9 1399.7 332.4 1395.9 334.4 1392.5 C336.3 1389.1 338.2 1385.9 340.3 1383.7 C342.4 1381.5 344.2 1380.3 347.1 1379.5 C350.0 1378.7 352.8 1378.9 357.8 1378.9 C362.8 1378.9 370.7 1379.4 377.2 1379.5 C383.7 1379.6 390.2 1379.7 396.7 1379.5 C403.2 1379.3 409.6 1379.1 416.1 1378.5 C422.6 1377.9 429.0 1377.1 435.5 1376 C442.0 1374.9 448.5 1373.9 455 1372.1 C461.5 1370.3 468.6 1367.6 474.4 1365.3 C480.2 1363.0 485.1 1360.6 490 1358.5 C494.9 1356.4 499.7 1353.9 503.6 1352.6 C507.5 1351.2 509.1 1350.6 513.3 1350.4 C517.5 1350.2 522.4 1351.3 528.9 1351.7 C535.4 1352.1 545.4 1352.3 552.2 1352.6 C559.1 1352.8 563.8 1353.0 570 1353.2 C576.2 1353.4 582.9 1353.2 589.4 1353.6 C595.9 1354.0 602.4 1354.8 608.9 1355.6 C615.4 1356.4 621.8 1357.4 628.3 1358.5 C634.8 1359.6 642.9 1361.6 647.8 1362.4 C652.7 1363.2 652.6 1363.2 657.5 1363.3 C662.4 1363.4 668.8 1363.1 676.9 1363.3 C685.0 1363.5 698.0 1363.8 706.1 1364.3 C714.2 1364.8 719.1 1365.4 725.6 1366.2 C732.1 1367.0 738.5 1368.1 745 1369.2 C751.5 1370.3 757.9 1371.6 764.4 1373.1 C770.9 1374.5 777.4 1376.2 783.9 1377.9 C790.4 1379.6 796.8 1381.2 803.3 1383.2 C809.8 1385.2 817.0 1387.6 822.8 1389.6 C828.6 1391.6 833.8 1393.6 838.3 1395.4 C842.8 1397.2 846.8 1399.2 850 1400.3 C853.2 1401.4 855.7 1401.7 857.8 1401.8 C859.9 1401.9 861.8 1400.9 862.6 1400.7" fill="none" stroke="#e51b1c" stroke-width="6.4" stroke-linecap="round" stroke-linejoin="round"/></svg>
</body></html>
